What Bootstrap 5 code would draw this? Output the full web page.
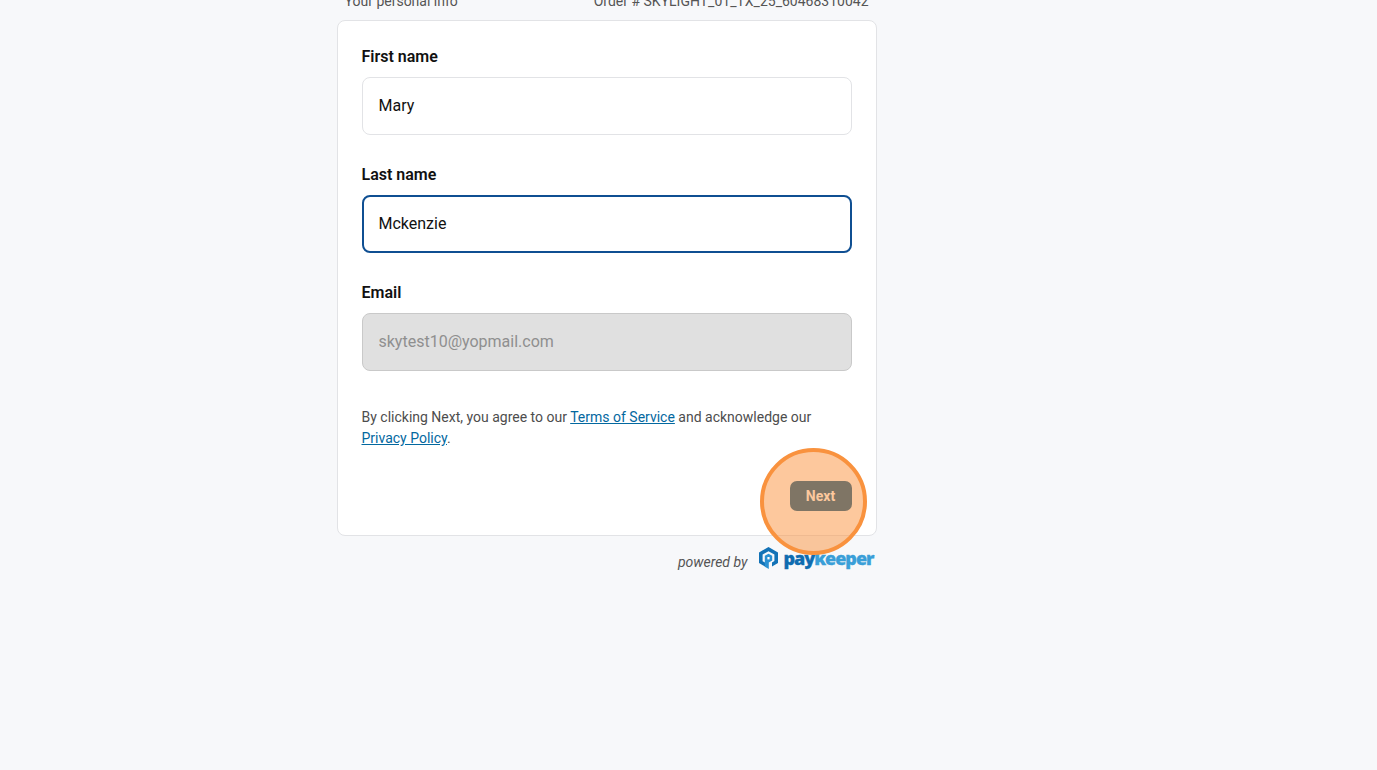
<!doctype html>
<html lang="en">
<head>
<meta charset="utf-8">
<title>Your personal info</title>
<link href="https://cdn.jsdelivr.net/npm/bootstrap@5.3.0/dist/css/bootstrap.min.css" rel="stylesheet">
<style>
html,body{height:770px;overflow:hidden}
body{background:#f7f8fa;font-family:Roboto,"Liberation Sans",sans-serif;color:#111}
.pay-wrap{width:540px;margin:-9px auto 0 336.5px;position:relative}
.pay-top{height:29px;padding:0 8px;font-size:14px;line-height:20px;color:#555}
.pay-card{height:516px;background:#fff;border:1px solid #e2e3e6;border-radius:8px;padding:24px}
.pay-field{margin-bottom:28px}
.pay-label{display:block;font-size:16px;font-weight:600;line-height:24px;margin:0 0 8px;height:24px;color:#111}
.pay-input.form-control{height:58px;border:1px solid #e2e3e6;border-radius:8px;padding:0 16px 2px;font-size:16px;color:#111;background:#fff;box-shadow:none}
.pay-input.pay-focus{border:2px solid #0f4f92;padding:0 15px 2px}
.pay-input.form-control:disabled{background:#e0e0e0;border-color:#c9c9c9;color:#8f8f8f;opacity:1}
.pay-terms{font-size:14px;line-height:21px;color:#4d4d4d;margin:0;padding-top:8px}
.pay-terms a{color:#03689f}
.pay-actions{margin-top:32px}
.pay-next.btn{width:62px;height:30px;padding:0;font-size:14px;font-weight:700;border:0;border-radius:7px;background:#03588e;color:#fff}
.pay-foot{height:36px;padding-right:3px;gap:11px}
.pay-by{font-size:14px;font-style:italic;color:#555;padding-top:16px}
.pay-logo{display:flex;align-items:center;gap:4px;font-family:"Open Sans",sans-serif;font-weight:800;font-size:18px;line-height:24px;letter-spacing:-1px;padding-top:7px;-webkit-text-stroke:.3px currentColor}
.pay-logo svg{width:21px;height:24px;flex:none}
.pay-dark{color:#0f6cb0}
.pay-light{color:#3a9fd8}
.pay-spot{position:absolute;left:423.5px;top:457px;width:107px;height:107px;border-radius:50%;border:4.5px solid #f9923e;background:rgba(251,146,60,.5);pointer-events:none}
</style>
</head>
<body>
<div class="pay-wrap">
  <div class="pay-top d-flex justify-content-between">
    <span>Your personal info</span>
    <span>Order # SKYLIGHT_01_TX_25_60468310042</span>
  </div>
  <div class="pay-card">
    <div class="pay-field">
      <label class="pay-label" for="fn">First name</label>
      <input id="fn" class="form-control pay-input" value="Mary">
    </div>
    <div class="pay-field">
      <label class="pay-label" for="ln">Last name</label>
      <input id="ln" class="form-control pay-input pay-focus" value="Mckenzie">
    </div>
    <div class="pay-field">
      <label class="pay-label" for="em">Email</label>
      <input id="em" class="form-control pay-input" value="skytest10@yopmail.com" disabled>
    </div>
    <p class="pay-terms">By clicking Next, you agree to our <a href="#">Terms of Service</a> and acknowledge our <a href="#">Privacy Policy</a>.</p>
    <div class="pay-actions d-flex justify-content-end">
      <button type="button" class="btn pay-next">Next</button>
    </div>
  </div>
  <div class="pay-foot d-flex justify-content-end align-items-center">
    <span class="pay-by">powered by</span>
    <span class="pay-logo">
      <svg viewBox="0 0 21 24" aria-hidden="true">
        <path d="M10.5 1 20 6.5V17l-6 3.4v-3.9l2.4-1.4V8.6l-5.9-3.4-5.9 3.4v6.6l2.4 1.4v3.9L1 17V6.5Z" fill="#1272b6"/>
        <path d="M6.8 9.8l3.7-2.1 3.7 2.1v4.8l-3.4 1.9V23l-4-2.3Z" fill="#2a90d2"/>
        <path d="M9.4 11h2.2v2.4H9.4Z" fill="#fff"/>
      </svg>
      <span><span class="pay-dark">pay</span><span class="pay-light">keeper</span></span>
    </span>
  </div>
  <div class="pay-spot"></div>
</div>
</body>
</html>
